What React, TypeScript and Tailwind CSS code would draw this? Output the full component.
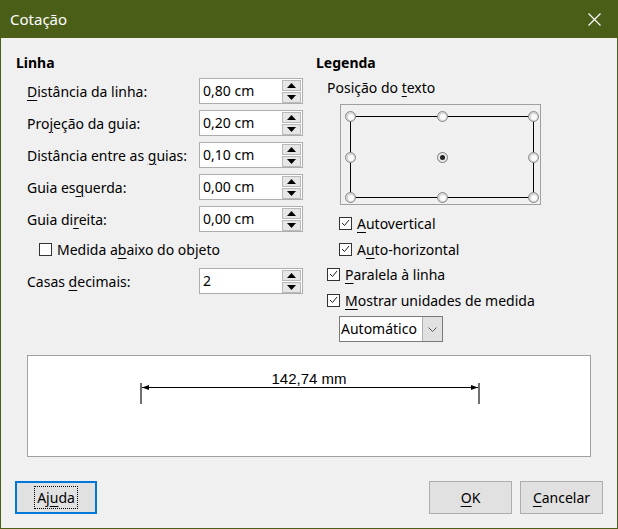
import React from 'react'

const font = { fontFamily: '"Noto Sans", "Liberation Sans", sans-serif' }

function U({ t, i }: { t: string; i: number }) {
    return (
        <>
            {t.slice(0, i)}
            <span className="underline decoration-1 underline-offset-[3px]">{t[i]}</span>
            {t.slice(i + 1)}
        </>
    )
}

function Arrow({ down }: { down?: boolean }) {
    return (
        <div className="flex h-[11px] w-[19px] items-center justify-center border border-[#b9b9b9] bg-[#e6e6e6]">
            <svg width="9" height="5" viewBox="0 0 9 5">
                {down ? <polygon points="0,0 9,0 4.5,5" fill="#000" /> : <polygon points="0,5 9,5 4.5,0" fill="#000" />}
            </svg>
        </div>
    )
}

function Spin({ value }: { value: string }) {
    return (
        <div className="flex h-[26px] w-[104px] items-center border border-[#adadad] bg-white pl-[3px] pr-[1px]">
            <span className="flex-1 text-[14px] leading-none text-black">{value}</span>
            <div className="flex flex-col gap-[1px]">
                <Arrow />
                <Arrow down />
            </div>
        </div>
    )
}

function Row({ label, u, value }: { label: string; u: number; value: string }) {
    return (
        <div className="flex h-[26px] items-center pl-[12px]">
            <span className="flex-1">
                <U t={label} i={u} />
            </span>
            <Spin value={value} />
        </div>
    )
}

function Check({ label, u, checked }: { label: string; u: number; checked?: boolean }) {
    return (
        <div className="flex h-[20px] items-center gap-[5px]">
            <div className="flex h-[13px] w-[13px] items-center justify-center border border-[#333] bg-white">
                {checked && (
                    <svg width="9" height="8" viewBox="0 0 9 8">
                        <polyline points="1,4 3.5,6.5 8,1" fill="none" stroke="#222" strokeWidth="1" />
                    </svg>
                )}
            </div>
            <span>
                <U t={label} i={u} />
            </span>
        </div>
    )
}

function PositionBox() {
    const pts: [number, number][] = [
        [9, 11], [101, 11], [192, 11],
        [9, 52], [192, 52],
        [9, 92], [101, 92], [192, 92],
    ]
    return (
        <div className="ml-[24px] mt-[6px] h-[101px] w-[201px] border border-[#a0a0a0]">
            <svg width="199" height="99" viewBox="0 0 199 99">
                <rect x="9.5" y="11.5" width="183" height="81" fill="none" stroke="#000" strokeWidth="1" />
                {pts.map(([x, y], i) => (
                    <g key={i}>
                        <circle cx={x + 0.5} cy={y + 0.5} r="5" fill="#d9d9d9" stroke="#8a8a8a" strokeWidth="1" />
                        <circle cx={x + 1} cy={y + 1} r="3" fill="#fafafa" />
                    </g>
                ))}
                <circle cx="101.5" cy="52.5" r="5" fill="#e8e8e8" stroke="#7a7a7a" strokeWidth="1" />
                <circle cx="101.5" cy="52.5" r="2.5" fill="#222" />
            </svg>
        </div>
    )
}

function Button({ label, u, focused }: { label: string; u: number; focused?: boolean }) {
    return (
        <button
            className={
                'flex h-[33px] items-center justify-center bg-[#e1e1e1] text-[14px] text-black ' +
                (focused ? 'w-[82px] border-2 border-[#0078d7]' : 'w-[83px] border border-[#adadad]')
            }
        >
            <span className={focused ? 'border border-dotted border-black px-[2px] leading-[21px]' : 'leading-[20px]'}>
                <U t={label} i={u} />
            </span>
        </button>
    )
}

export default function App() {
    return (
        <div style={font} className="flex h-[529px] w-[618px] flex-col overflow-hidden bg-[#4b5e18] text-[14px] text-black">
            {/* Title bar */}
            <div className="flex h-[38px] shrink-0 items-center justify-between pl-[10px] pr-[17px]">
                <span className="text-[15px] text-white">Cotação</span>
                <svg width="13" height="13" viewBox="0 0 13 13">
                    <path d="M0.5 0.5 L12.5 12.5 M12.5 0.5 L0.5 12.5" stroke="#fff" strokeWidth="1.2" />
                </svg>
            </div>

            {/* Body */}
            <div className="mx-[1px] mb-[1px] flex flex-1 flex-col bg-[#f0f0f0] px-[14px] pt-[15px]">
                <div className="flex items-start">
                    {/* Linha */}
                    <div className="flex w-[288px] flex-col">
                        <div className="mb-[5px] h-[20px] pl-[1px] font-bold leading-[20px]">Linha</div>
                        <div className="flex flex-col gap-[6px]">
                            <Row label="Distância da linha:" u={0} value="0,80 cm" />
                            <Row label="Projeção da guia:" u={3} value="0,20 cm" />
                            <Row label="Distância entre as guias:" u={19} value="0,10 cm" />
                            <Row label="Guia esquerda:" u={7} value="0,00 cm" />
                            <Row label="Guia direita:" u={7} value="0,00 cm" />
                        </div>
                        <div className="mb-[6px] mt-[4px] flex h-[26px] items-center pl-[24px]">
                            <Check label="Medida abaixo do objeto" u={8} />
                        </div>
                        <Row label="Casas decimais:" u={6} value="2" />
                    </div>

                    {/* Legenda */}
                    <div className="ml-[13px] flex flex-col">
                        <div className="h-[20px] font-bold leading-[20px]">Legenda</div>
                        <div className="mt-[5px] h-[20px] pl-[11px] leading-[20px]">
                            <U t="Posição do texto" i={11} />
                        </div>
                        <PositionBox />
                        <div className="mt-[8px] flex flex-col gap-[6px] pl-[23px]">
                            <Check label="Autovertical" u={0} checked />
                            <Check label="Auto-horizontal" u={1} checked />
                        </div>
                        <div className="mt-[5px] flex flex-col gap-[6px] pl-[11px]">
                            <Check label="Paralela à linha" u={0} checked />
                            <Check label="Mostrar unidades de medida" u={0} checked />
                        </div>
                        <div className="ml-[23px] mt-[6px] flex h-[26px] w-[104px] items-center border border-[#7a7a7a] bg-white">
                            <span className="flex-1 pl-[1px] leading-none">Automático</span>
                            <div className="flex h-full w-[20px] items-center justify-center border-l border-[#adadad] bg-[#e1e1e1]">
                                <svg width="9" height="5" viewBox="0 0 9 5">
                                    <polyline points="0.5,0.5 4.5,4.5 8.5,0.5" fill="none" stroke="#555" strokeWidth="1" />
                                </svg>
                            </div>
                        </div>
                    </div>
                </div>

                {/* Preview */}
                <div className="relative ml-[12px] mt-[13px] h-[102px] w-[564px] border border-[#a0a0a0] bg-white">
                    <span
                        style={{ fontFamily: '"Liberation Sans", Arial, sans-serif' }}
                        className="absolute left-0 right-0 top-[14px] text-center text-[15px] leading-[18px]"
                    >
                        142,74 mm
                    </span>
                    <svg className="absolute left-0 top-0" width="562" height="100" viewBox="0 0 562 100">
                        <line x1="114" y1="31.5" x2="450" y2="31.5" stroke="#000" strokeWidth="1" />
                        <line x1="113" y1="27" x2="113" y2="48" stroke="#707070" strokeWidth="2" />
                        <line x1="451" y1="27" x2="451" y2="48" stroke="#707070" strokeWidth="2" />
                        <polygon points="114,31.5 121,29 121,34" fill="#000" />
                        <polygon points="450,31.5 443,29 443,34" fill="#000" />
                    </svg>
                </div>

                {/* Buttons */}
                <div className="mt-[24px] flex items-center">
                    <Button label="Ajuda" u={2} focused />
                    <div className="flex-1" />
                    <div className="flex gap-[8px]">
                        <Button label="OK" u={0} />
                        <Button label="Cancelar" u={0} />
                    </div>
                </div>
            </div>
        </div>
    )
}
